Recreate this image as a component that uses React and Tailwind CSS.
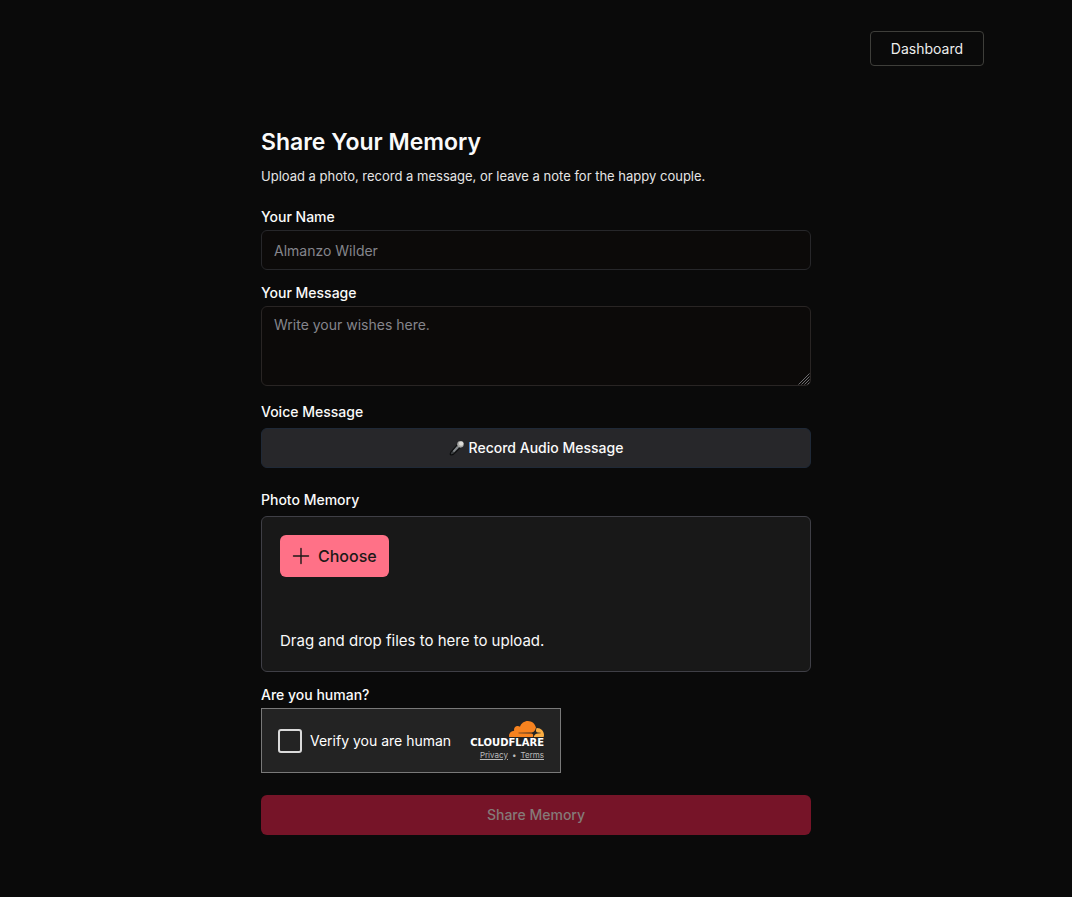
import React from "react";

const label = "block text-sm leading-5 font-medium text-neutral-50";

function MicIcon() {
  return (
    <svg viewBox="0 0 16 16" className="size-4" aria-hidden="true">
      <path d="M9 4.2 11.8 7 4.3 14.4 2 15 1.1 14.1 2 11.8Z" fill="#3c3f42" stroke="#0c0d0e" strokeWidth="1.1" strokeLinejoin="round" />
      <path d="M8.2 6 9.8 7.6 5 12.3 3.8 11Z" fill="#85898c" />
      <path d="m8.4 3.9 3.7 3.7" stroke="#5d6468" strokeWidth="1.2" />
      <circle cx="11.5" cy="4.2" r="3.2" fill="#a9a9a7" />
      <circle cx="12.2" cy="3.6" r="2.2" fill="#dddcd7" />
    </svg>
  );
}

function ResizeGrip() {
  return (
    <svg viewBox="0 0 12 12" className="pointer-events-none absolute right-px bottom-px size-3" fill="none" stroke="#85858a" strokeWidth="0.8" aria-hidden="true">
      <path d="M0.5 11.5l11-11M3.5 11.5l8-8M6.5 11.5l5-5M9.5 11.5l2-2" />
    </svg>
  );
}

function CloudflareMark() {
  return (
    <svg viewBox="0 6.57 24 10.86" className="h-4 w-[35px]" aria-hidden="true">
      <path fill="#f6821f" d="M16.5088 16.8447c.1475-.5068.0908-.9707-.1553-1.3154-.2246-.3164-.6045-.499-1.0615-.5205l-8.6592-.1123a.1559.1559 0 0 1-.1333-.0713c-.0283-.042-.0351-.0986-.021-.1553.0278-.084.1123-.1484.2036-.1562l8.7359-.1123c1.0351-.0489 2.1601-.8868 2.5537-1.9136l.499-1.3013c.0215-.0561.0293-.1128.0147-.168-.5625-2.5463-2.835-4.4453-5.5499-4.4453-2.5039 0-4.6284 1.6177-5.3876 3.8614-.4927-.3658-1.1187-.5625-1.794-.499-1.2026.119-2.1665 1.083-2.2861 2.2856-.0283.31-.0069.6128.0635.894C1.5683 13.171 0 14.7754 0 16.752c0 .1748.0142.3515.0352.5273.0141.083.0844.1475.1689.1475h15.9814c.0909 0 .1758-.0645.2032-.1553z" />
      <path fill="#fbad41" d="M19.2656 11.2813c-.0771 0-.1611 0-.2383.0112-.0566 0-.1054.0415-.127.0976l-.3378 1.1744c-.1475.5068-.0918.9707.1543 1.3164.2256.3164.6055.498 1.0625.5195l1.8437.1133c.0557 0 .1055.0263.1329.0703.0283.043.0351.1074.0214.1562-.0283.084-.1132.1485-.204.1553l-1.921.1123c-1.041.0488-2.1582.8867-2.5527 1.914l-.1406.3585c-.0283.0713.0215.1416.0986.1416h6.5977c.0771 0 .1474-.0489.169-.126.1122-.4082.1757-.837.1757-1.2803 0-2.6025-2.125-4.727-4.7344-4.727" />
    </svg>
  );
}

export default function App() {
  return (
    <div className="min-h-screen bg-[#0a0a0a] font-['Inter',sans-serif] text-neutral-50">
      <header className="mx-auto flex max-w-4xl justify-end pt-[31px]">
        <a href="#dashboard" className="rounded-sm border border-[#3e3e3a] px-5 py-1.5 text-sm leading-[21px] text-[#ededec]">
          Dashboard
        </a>
      </header>

      <main className="mx-auto max-w-[550px] pt-15 pb-15">
        <h1 className="text-[23px] leading-8 font-semibold">Share Your Memory</h1>
        <p className="mt-2 text-[13px] leading-5 text-neutral-200">
          Upload a photo, record a message, or leave a note for the happy couple.
        </p>

        <form className="mt-[21px]">
          <label htmlFor="name" className={label}>Your Name</label>
          <input
            id="name"
            type="text"
            placeholder="Almanzo Wilder"
            className="mt-[3px] block h-10 w-full rounded-md border border-[#27272a] bg-[#0c0a09] px-3 text-sm placeholder:text-[#85858c]"
          />

          <label htmlFor="message" className={`${label} mt-[13px]`}>Your Message</label>
          <div className="relative mt-[3px]">
            <textarea
              id="message"
              placeholder="Write your wishes here."
              className="block h-20 w-full resize-none rounded-md border border-[#292524] bg-[#0c0a09] px-3 py-2 text-sm leading-5 placeholder:text-[#85858c]"
            />
            <ResizeGrip />
          </div>

          <span id="voice" className={`${label} mt-4`}>Voice Message</span>
          <button
            type="button"
            aria-describedby="voice"
            className="mt-1.5 flex h-10 w-full items-center justify-center gap-1 rounded-md border border-[#1f2937] bg-[#27272a] text-sm font-medium"
          >
            <MicIcon />
            Record Audio Message
          </button>

          <span id="photo" className={`${label} mt-[22px]`}>Photo Memory</span>
          <section aria-labelledby="photo" className="mt-1.5 rounded-md border border-[#3f3f46] bg-[#181818] p-[18px]">
            <button type="button" className="flex h-[42px] items-center gap-2 rounded-md bg-[#ff7187] px-3 text-base font-medium text-[#1c1917]">
              <svg viewBox="0 0 18 18" className="size-[18px]" fill="none" stroke="currentColor" strokeWidth="1.4" strokeLinecap="round" aria-hidden="true">
                <path d="M9 1.5v15M1.5 9h15" />
              </svg>
              Choose
            </button>
            <p className="mt-[52px] text-[15px] leading-6">Drag and drop files to here to upload.</p>
          </section>

          <span id="human" className={`${label} mt-[13px]`}>Are you human?</span>
          <div role="group" aria-labelledby="human" className="mt-[3px] flex h-[65px] w-[300px] items-center justify-between border border-[#797979] bg-[#232323] px-4">
            <label className="flex items-center gap-2 text-sm text-white">
              <input type="checkbox" className="size-6 appearance-none rounded-[3px] border-2 border-[#dadada] bg-[#232323] checked:bg-[#dadada]" />
              Verify you are human
            </label>
            <div className="flex flex-col items-end">
              <CloudflareMark />
              <span className="font-['DejaVu_Sans',sans-serif] text-[10px] leading-3 font-bold text-white">CLOUDFLARE</span>
              <div className="flex gap-1 text-[8px] leading-3 text-[#bbbbbb]">
                <a href="#privacy" className="underline">Privacy</a>
                <span>•</span>
                <a href="#terms" className="underline">Terms</a>
              </div>
            </div>
          </div>

          <button type="submit" disabled className="mt-[22px] h-10 w-full rounded-md bg-[#761428] text-sm font-medium text-[#857a78]">
            Share Memory
          </button>
        </form>
      </main>
    </div>
  );
}
